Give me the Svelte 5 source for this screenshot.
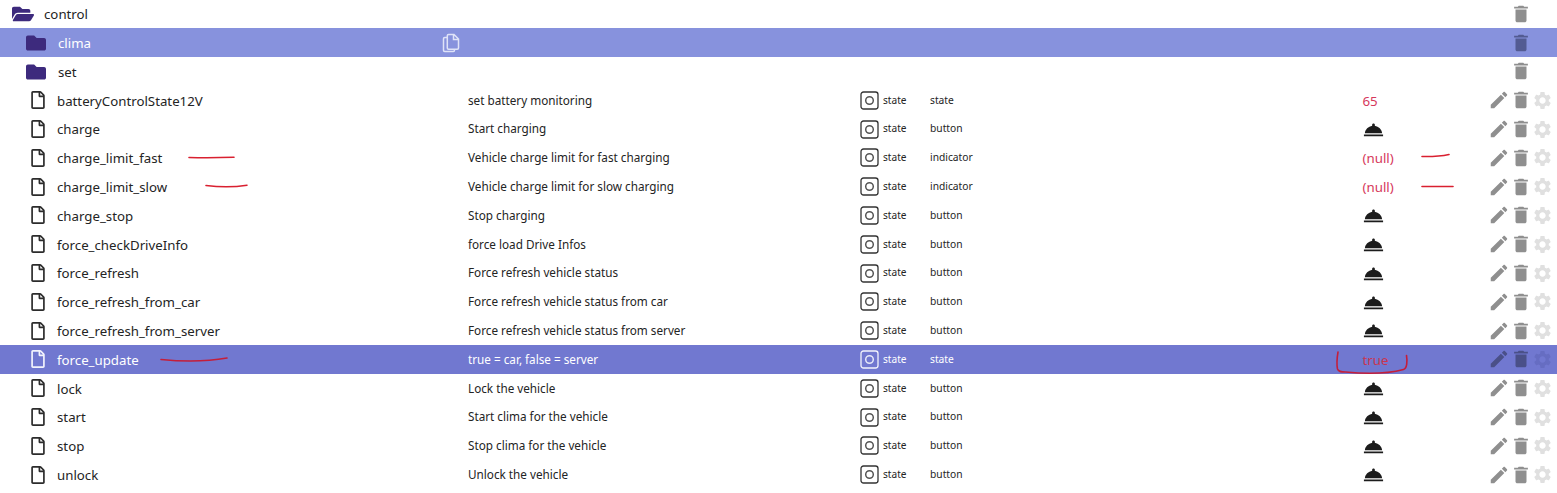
<script>
  const rows = [
    { kind: 'open', name: 'control' },
    { kind: 'folder', name: 'clima', sel: 'a', copy: true },
    { kind: 'folder', name: 'set' },
    { kind: 'file', name: 'batteryControlState12V', desc: 'set battery monitoring', role: 'state', value: '65' },
    { kind: 'file', name: 'charge', desc: 'Start charging', role: 'button' },
    { kind: 'file', name: 'charge_limit_fast', desc: 'Vehicle charge limit for fast charging', role: 'indicator', value: '(null)' },
    { kind: 'file', name: 'charge_limit_slow', desc: 'Vehicle charge limit for slow charging', role: 'indicator', value: '(null)' },
    { kind: 'file', name: 'charge_stop', desc: 'Stop charging', role: 'button' },
    { kind: 'file', name: 'force_checkDriveInfo', desc: 'force load Drive Infos', role: 'button' },
    { kind: 'file', name: 'force_refresh', desc: 'Force refresh vehicle status', role: 'button' },
    { kind: 'file', name: 'force_refresh_from_car', desc: 'Force refresh vehicle status from car', role: 'button' },
    { kind: 'file', name: 'force_refresh_from_server', desc: 'Force refresh vehicle status from server', role: 'button' },
    { kind: 'file', name: 'force_update', desc: 'true = car, false = server', role: 'state', value: 'true', sel: 'b' },
    { kind: 'file', name: 'lock', desc: 'Lock the vehicle', role: 'button' },
    { kind: 'file', name: 'start', desc: 'Start clima for the vehicle', role: 'button' },
    { kind: 'file', name: 'stop', desc: 'Stop clima for the vehicle', role: 'button' },
    { kind: 'file', name: 'unlock', desc: 'Unlock the vehicle', role: 'button' }
  ];
</script>

<div class="page">
  <div class="list">
    {#each rows as r}
      <div class="row {r.kind}" class:sel-a={r.sel === 'a'} class:sel-b={r.sel === 'b'}>
        <div class="name">
          {#if r.kind === 'open'}
            <svg class="ico-open" viewBox="0 0 576 512"><path d="M572.694 292.093L500.27 416.248A63.997 63.997 0 0 1 444.989 448H45.025c-18.523 0-30.064-20.093-20.731-36.093l72.424-124.155A64 64 0 0 1 152 256h399.964c18.523 0 30.064 20.093 20.73 36.093zM152 224h328v-48c0-26.51-21.49-48-48-48H272l-64-64H48C21.49 64 0 85.49 0 112v278.046l69.077-118.418C86.214 242.25 118.062 224 152 224z"/></svg>
          {:else if r.kind === 'folder'}
            <svg class="ico-folder" viewBox="0 0 512 512"><path d="M464 128H272l-64-64H48C21.49 64 0 85.49 0 112v288c0 26.51 21.49 48 48 48h416c26.51 0 48-21.49 48-48V176c0-26.51-21.49-48-48-48z"/></svg>
          {:else}
            <svg class="ico-file" viewBox="0 0 384 512"><path d="M369.9 97.9L286 14C277 5 264.8-.1 252.1-.1H48C21.5 0 0 21.5 0 48v416c0 26.5 21.5 48 48 48h288c26.5 0 48-21.5 48-48V131.9c0-12.7-5.1-25-14.1-34zM332.1 128H256V51.9l76.1 76.1zM48 464V48h160v104c0 13.3 10.7 24 24 24h104v288H48z"/></svg>
          {/if}
          <span>{r.name}</span>
          {#if r.copy}
            <svg class="ico-copy" viewBox="0 0 18 20"><path d="M6.5 1.5h5.5l4.5 4.5v9a1.2 1.2 0 0 1-1.2 1.2H6.5a1.2 1.2 0 0 1-1.2-1.2V2.7a1.2 1.2 0 0 1 1.2-1.2zM11.5 1.5v5h5M5.3 4.5H2.7a1.2 1.2 0 0 0-1.2 1.2v11.6a1.2 1.2 0 0 0 1.2 1.2h8.6a1.2 1.2 0 0 0 1.2-1.2v-1.1"/></svg>
          {/if}
        </div>
        <div class="desc">{r.desc ?? ''}</div>
        <div class="type">
          {#if r.kind === 'file'}
            <svg class="ico-state" viewBox="0 0 19 19"><rect x="1" y="1" width="17" height="17" rx="2.5"/><circle cx="9.5" cy="9.5" r="3.8"/></svg>
            <span>state</span>
          {/if}
        </div>
        <div class="role">{r.role ?? ''}</div>
        <div class="value">
          {#if r.value}
            <span>{r.value}</span>
          {:else if r.role === 'button'}
            <svg class="ico-bell" viewBox="0 0 24 24"><path d="M2 17.3h20V19H2zM13.2 8.2c.2-.3.3-.6.3-.9 0-.8-.7-1.5-1.5-1.5s-1.5.7-1.5 1.5c0 .3.1.6.3.9C6.5 9 3.3 12 3 16h18c-.3-4-3.5-7-7.8-7.8z"/></svg>
          {/if}
        </div>
        <div class="actions">
          {#if r.kind === 'file'}
            <svg class="ico-pen" viewBox="0 0 24 24"><path d="M3 17.25V21h3.75L17.81 9.94l-3.75-3.75L3 17.25zM20.71 7.04c.39-.39.39-1.02 0-1.41l-2.34-2.34c-.39-.39-1.02-.39-1.41 0l-1.83 1.83 3.75 3.75 1.83-1.83z"/></svg>
          {/if}
          <svg class="ico-trash" viewBox="0 0 24 24"><path d="M6 19c0 1.1.9 2 2 2h8c1.1 0 2-.9 2-2V7H6v12zM19.5 4h-4l-1-1h-5l-1 1h-4v2h15V4z"/></svg>
          {#if r.kind === 'file'}
            <svg class="ico-gear" viewBox="0 0 24 24"><path d="M19.14 12.94c.04-.3.06-.61.06-.94 0-.32-.02-.64-.07-.94l2.03-1.58c.18-.14.23-.41.12-.61l-1.92-3.32c-.12-.22-.37-.29-.59-.22l-2.39.96c-.5-.38-1.03-.7-1.62-.94l-.36-2.54c-.04-.24-.24-.41-.48-.41h-3.84c-.24 0-.43.17-.47.41l-.36 2.54c-.59.24-1.13.57-1.62.94l-2.39-.96c-.22-.08-.47 0-.59.22L2.74 8.87c-.12.21-.08.47.12.61l2.03 1.58c-.05.3-.09.63-.09.94s.02.64.07.94l-2.03 1.58c-.18.14-.23.41-.12.61l1.92 3.32c.12.22.37.29.59.22l2.39-.96c.5.38 1.03.7 1.62.94l.36 2.54c.05.24.24.41.48.41h3.84c.24 0 .44-.17.47-.41l.36-2.54c.59-.24 1.13-.56 1.62-.94l2.39.96c.22.08.47 0 .59-.22l1.92-3.32c.12-.22.07-.47-.12-.61l-2.01-1.58zM12 15.6c-1.98 0-3.6-1.62-3.6-3.6s1.62-3.6 3.6-3.6 3.6 1.62 3.6 3.6-1.62 3.6-3.6 3.6z"/></svg>
          {/if}
        </div>
      </div>
    {/each}
  </div>

  <svg class="marks" viewBox="0 0 1557 493">
    <path d="M189 157.5c15 .5 30 .3 45 -.2"/>
    <path d="M206 185.5c12 1.5 28 1.8 41 -.3"/>
    <path d="M1422 156.5c10 .2 19 -.3 27 -2"/>
    <path d="M1422 186.5h31"/>
    <path class="dark" d="M161 359.5c18 1.8 45 2.3 66 -1.5"/>
    <path class="dark" d="M1338 352c-1 6 -1.5 12 -.5 17c1 3 4 3 8 3c20 2 43 1.5 58 -2.5c3.5 -1 4 -8 3 -14"/>
  </svg>
</div>

<style>
  :global(body) {
    margin: 0;
    background: #fff;
  }
  .page {
    position: relative;
    width: 1557px;
    height: 493px;
    overflow: hidden;
    font-family: "Noto Sans", sans-serif;
    color: #242424;
  }
  .list {
    margin-top: -0.5px;
  }
  .row {
    display: grid;
    grid-template-columns: 468px 392px 70px 432px 128px 67px;
    height: 28.8px;
    align-items: center;
  }
  .name {
    display: flex;
    align-items: center;
    font-size: 13.25px;
    position: relative;
  }
  .name span { padding-top: 0.5px; }
  .open .name { padding-left: 12px; }
  .folder .name { padding-left: 26px; }
  .file .name { padding-left: 31px; }
  svg { display: block; flex: none; }
  .ico-open { width: 22px; height: 20px; margin-right: 10px; fill: #3d2a7d; }
  .ico-folder { width: 20px; height: 20px; margin-right: 12px; fill: #3d2a7d; }
  .ico-file { width: 14px; height: 18px; margin-right: 12px; fill: #2c2c2c; }
  .ico-copy {
    position: absolute;
    left: 442px;
    top: 50%;
    transform: translateY(-50%);
    width: 18px;
    height: 20px;
    fill: none;
    stroke: #dfe3f8;
    stroke-width: 1.5;
  }
  .desc { font-size: 11.72px; padding-bottom: 1.5px; }
  .type {
    display: flex;
    align-items: center;
    gap: 4px;
    font-size: 10.1px;
  }
  .type span { padding-bottom: 1.3px; }
  .ico-state {
    width: 19px;
    height: 19px;
    fill: none;
    stroke: #333;
    stroke-width: 1.3;
  }
  .ico-state circle { stroke: #555; stroke-width: 1.5; }
  .role { font-size: 10.25px; padding-bottom: 1.3px; }
  .value { font-size: 13.3px; color: #d6385c; padding-top: 0.5px; }
  .value span { padding-left: 0.5px; }
  .ico-bell { width: 23px; height: 23px; fill: #1c1c1c; }
  .actions {
    display: flex;
    align-items: center;
    justify-content: flex-end;
    padding-right: 4px;
  }
  .ico-pen, .ico-trash { width: 22px; height: 22px; fill: #8f8f8f; }
  .ico-gear { width: 21px; height: 21px; fill: #e0e0e0; }
  .open .actions, .folder .actions { padding-right: 25px; }
  .folder:nth-child(3) .name { padding-top: 1px; }

  .sel-a { background: #8792dd; color: #fff; }
  .sel-b { background: #7178d0; color: #fff; }
  .sel-b .ico-file { fill: #f2f3fc; }
  .sel-b .ico-state { stroke: #f2f3fc; }
  .sel-b .ico-state circle { stroke: #e6e8f8; }
  .sel-a .ico-trash { fill: #535b92; }
  .sel-b .ico-trash, .sel-b .ico-pen { fill: #4a5088; }
  .sel-b .ico-gear { fill: #666dc2; }
  .sel-b .value { color: #c9354f; }

  .marks {
    position: absolute;
    inset: 0;
    width: 1557px;
    height: 493px;
    fill: none;
    stroke: #d92030;
    stroke-width: 1.6;
    stroke-linecap: round;
    pointer-events: none;
  }
  .marks .dark { stroke: #c41e3a; }
</style>
